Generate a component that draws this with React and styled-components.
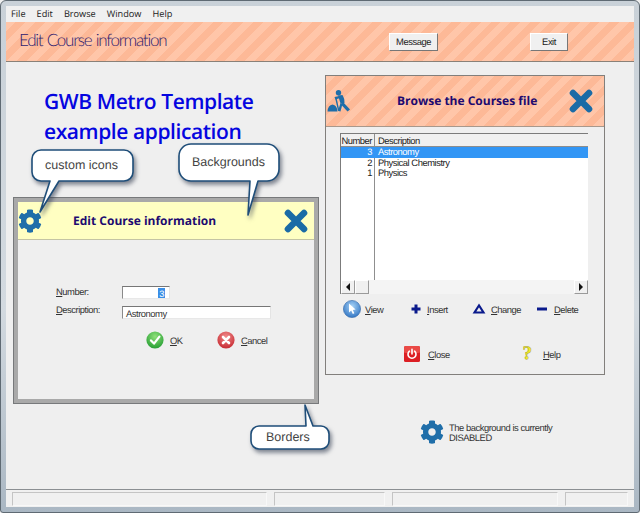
import React from 'react';
import styled, { createGlobalStyle } from 'styled-components';
import { FaCog } from 'react-icons/fa';

const Global = createGlobalStyle`
  html, body {
    margin: 0;
    padding: 0;
    background: #efefef;
  }
  * {
    box-sizing: border-box;
  }
`;

const stripes = `repeating-linear-gradient(135deg, #ffc6a9 0 7px, #fdb997 7px 14px)`;
const smallFont = `
  font: 400 9.4px/11px 'Liberation Sans', Arial, sans-serif;
  letter-spacing: -0.46px;
  text-rendering: geometricPrecision;
`;

const Frame = styled.div`
  width: 640px;
  height: 513px;
  display: flex;
  flex-direction: column;
  padding: 5px;
  border: 1px solid #5f6a73;
  border-radius: 6px 6px 3px 3px;
  background: linear-gradient(180deg, #c9d1d8 0%, #d3dae0 60%, #aab7c3 100%);
  overflow: hidden;
`;

const MenuBar = styled.div`
  height: 16px;
  flex: none;
  display: flex;
  gap: 11px;
  padding-left: 5px;
  align-items: center;
  background: #f0f0f0;
  color: #222;
  font: 400 9.2px/16px 'Open Sans', sans-serif;
  text-rendering: geometricPrecision;
`;

const Band = styled.div`
  height: 40px;
  flex: none;
  display: flex;
  align-items: center;
  background: ${stripes};
  border-bottom: 1px solid #8a8178;
`;

const BandTitle = styled.div`
  width: 383px;
  padding: 0 0 3px 13px;
  color: #2c1a70;
  font: 300 17px/20px Lato, sans-serif;
  letter-spacing: -1.25px;
  word-spacing: 1px;
  text-rendering: geometricPrecision;
  white-space: nowrap;
`;

const BandButton = styled.button`
  width: ${p => p.$width}px;
  height: 18px;
  margin-left: ${p => p.$gap || 0}px;
  padding: 0;
  background: #f0f0f0;
  border: 1px solid #fff;
  border-right: 1px solid #777;
  border-bottom: 1px solid #777;
  color: #222;
  ${smallFont}
`;

const Workspace = styled.div`
  position: relative;
  flex: 1;
  padding: 25px 38px;
  background: #efefef;
  border-bottom: 1px solid #8b8f92;
`;

const Heading = styled.h1`
  margin: 0;
  color: #0505e0;
  font: 600 21px/30px 'Open Sans', sans-serif;
  letter-spacing: -0.42px;
  text-rendering: geometricPrecision;
`;

const ChildWindow = styled.div`
  position: absolute;
  left: ${p => p.$left}px;
  top: ${p => p.$top}px;
  width: ${p => p.$width}px;
  height: ${p => p.$height}px;
  display: flex;
  flex-direction: column;
  background: #efefef;
  border: ${p => p.$thick ? '4px solid #a9a9a9' : '1px solid #827f7c'};
  box-shadow: ${p => p.$thick ? '0 0 0 1px #77797b' : 'none'};
`;

const WindowHead = styled.div`
  flex: none;
  height: ${p => p.$height}px;
  display: flex;
  align-items: center;
  padding-right: ${p => p.$right}px;
  background: ${p => p.$yellow ? '#ffffc2' : stripes};
  border-bottom: 1px solid ${p => p.$yellow ? '#c4c4a4' : '#a8988c'};
  color: #1f6ea9;
`;

const WindowTitle = styled.div`
  margin-left: ${p => p.$gap}px;
  color: #200a70;
  font: 700 12px/16px 'Open Sans', sans-serif;
  text-rendering: geometricPrecision;
  white-space: nowrap;
`;

const HeadGear = styled(FaCog)`
  flex: none;
  width: 24px;
  height: 24px;
`;

const WorkerIcon = styled.svg`
  flex: none;
  width: 24px;
  height: 24px;
  margin-left: 1px;
`;

const CloseMark = styled.svg`
  width: 26px;
  height: 26px;
  margin-left: auto;
  flex: none;
`;

const FormGrid = styled.div`
  display: grid;
  grid-template-columns: 66px 1fr;
  row-gap: 7px;
  padding: 46px 0 0 38px;
  align-items: start;
`;

const FieldLabel = styled.label`
  margin-top: ${p => p.$shift || 0}px;
  color: #333;
  ${smallFont}
`;

const TextBox = styled.div`
  width: ${p => p.$width}px;
  height: 13px;
  display: flex;
  justify-content: ${p => p.$right ? 'flex-end' : 'flex-start'};
  padding: 1px 4px 0 3px;
  background: #fff;
  border-top: 1px solid #767676;
  border-left: 1px solid #8a8a8a;
  border-right: 1px solid #e4e4e4;
  border-bottom: 1px solid #e8e8e8;
  color: #333;
  ${smallFont}
`;

const Selected = styled.span`
  background: #3a8ee6;
  color: #fff;
  padding: 0 1px;
`;

const ButtonRow = styled.div`
  display: flex;
  align-items: center;
  margin: ${p => p.$margin};
`;

const Action = styled.div`
  width: ${p => p.$width}px;
  flex: none;
  display: flex;
  align-items: center;
  gap: ${p => p.$gap}px;
  color: #333;
  ${smallFont}
`;

const IconSlot = styled.span`
  width: 18px;
  height: 18px;
  flex: none;
  display: flex;
  align-items: center;
  justify-content: center;
`;

const Key = styled.span`
  text-decoration: underline;
  text-underline-offset: 1px;
`;

const HelpGlyph = styled.span`
  color: #f4ee28;
  font: 700 19px/18px 'Liberation Serif', serif;
  -webkit-text-stroke: 0.5px #a9a21c;
`;

const ListBox = styled.div`
  width: 248px;
  height: 161px;
  margin: 6px 0 0 14px;
  display: flex;
  flex-direction: column;
  background: #fff;
  border-top: 1px solid #7b7b7b;
  border-left: 1px solid #7b7b7b;
  color: #222;
  ${smallFont}
`;

const ListRow = styled.div`
  display: grid;
  grid-template-columns: 34px 1fr;
  height: ${p => p.$height}px;
  line-height: ${p => p.$height}px;
  flex: none;
  background: ${p => p.$active ? '#3296f5' : 'transparent'};
  color: ${p => p.$active ? '#fff' : 'inherit'};
`;

const HeaderRow = styled(ListRow)`
  background: #f0f0f0;
  border-bottom: 1px solid #8d8d8d;
`;

const NumberCell = styled.div`
  text-align: right;
  padding-right: 2px;
  border-right: 1px solid ${p => p.$active ? 'transparent' : '#8f8f8f'};
`;

const TextCell = styled.div`
  padding-left: 3px;
`;

const ListBody = styled.div`
  flex: 1;
  background: linear-gradient(#8f8f8f, #8f8f8f) 33px 0 / 1px 100% no-repeat;
`;

const ScrollBar = styled.div`
  flex: none;
  height: 14px;
  display: flex;
  background: #f4f4f4;
`;

const ScrollButton = styled.div`
  width: ${p => p.$width || 14}px;
  margin-left: ${p => p.$push ? 'auto' : 0};
  display: flex;
  align-items: center;
  justify-content: center;
  background: #f0f0f0;
  border: 1px solid #fff;
  border-right-color: #9a9a9a;
  border-bottom-color: #9a9a9a;
`;

const Note = styled.div`
  position: absolute;
  left: 414px;
  top: 358px;
  display: flex;
  align-items: center;
  gap: 5px;
  color: #1f6ea9;
`;

const NoteText = styled.div`
  padding-top: 1px;
  color: #333;
  ${smallFont}
  line-height: 10px;
`;

const StatusBar = styled.div`
  flex: none;
  height: 17px;
  display: flex;
  gap: 7px;
  padding: 2px 6px 0 6px;
  background: #f0f0f0;
`;

const StatusField = styled.div`
  width: ${p => p.$width}px;
  height: 14px;
  border-top: 1px solid #c4c4c4;
  border-left: 1px solid #c4c4c4;
  border-right: 1px solid #f8f8f8;
  border-bottom: 1px solid #f8f8f8;
`;

const CalloutBox = styled.div`
  position: absolute;
  left: ${p => p.$left - 6}px;
  top: ${p => p.$top - 62}px;
  width: ${p => p.$width}px;
  height: ${p => p.$height}px;
`;

const CalloutShape = styled.svg`
  display: block;
  overflow: visible;
  filter: drop-shadow(2px 3px 2px rgba(50, 60, 80, 0.6));
`;

const CalloutText = styled.span`
  position: absolute;
  left: ${p => p.$x}px;
  top: ${p => p.$y}px;
  color: #444;
  font: 400 12.5px/16px 'Liberation Sans', Arial, sans-serif;
  text-rendering: geometricPrecision;
  white-space: nowrap;
`;

const Callout = ({ left, top, width, height, d, x, y, children }) => (
  <CalloutBox $left={left} $top={top} $width={width} $height={height}>
    <CalloutShape width={width} height={height} viewBox={`0 0 ${width} ${height}`}>
      <path d={d} fill="#fff" stroke="#1f4e79" strokeWidth="1.6" strokeLinejoin="round" />
    </CalloutShape>
    <CalloutText $x={x} $y={y}>{children}</CalloutText>
  </CalloutBox>
);

const XMark = () => (
  <CloseMark viewBox="0 0 26 26">
    <path d="M5 5 L21 21 M21 5 L5 21" stroke="#1a6ba6" strokeWidth="6.6" strokeLinecap="round" />
  </CloseMark>
);

const Worker = () => (
  <WorkerIcon viewBox="0 0 24 24" fill="#1f6ea9">
    <path d="M0.5 22.5 Q1 16 5.5 15.5 Q10 16 10.5 22.5 Z" />
    <circle cx="11.5" cy="3.8" r="2.7" />
    <path d="M11 6.5 L15.5 6 Q17.5 9 17.5 14 L13.5 14.5 Z" />
    <path d="M15.5 12.5 L23 20.5 L20.5 22.5 L14 15.5 Z" />
    <path d="M13.5 14 L15.5 15 L13.5 22.5 L11 22 Z" />
    <path d="M7.5 8 L12.5 7 L13 9 L8.6 10.4 Z" />
    <path d="M8 8.5 L9.4 8.2 L12.4 21.5 L11 21.8 Z" />
  </WorkerIcon>
);

const ViewIcon = () => (
  <svg width="18" height="18" viewBox="0 0 18 18">
    <defs>
      <radialGradient id="viewBall" cx="50%" cy="35%" r="70%">
        <stop offset="0" stopColor="#a9d4f7" />
        <stop offset="1" stopColor="#2a6fc0" />
      </radialGradient>
    </defs>
    <circle cx="9" cy="9" r="8.6" fill="url(#viewBall)" stroke="#3468a8" strokeWidth="0.6" />
    <path d="M6 3.6 L6 12.6 L8.2 10.6 L9.8 14 L11.4 13.2 L9.8 9.9 L12.6 9.6 Z" fill="#fff" />
  </svg>
);

const PlusIcon = () => (
  <svg width="18" height="18" viewBox="0 0 18 18">
    <path d="M9 4.5 V13.5 M4.5 9 H13.5" stroke="#0a1a8c" strokeWidth="3" />
  </svg>
);

const ChangeIcon = () => (
  <svg width="18" height="18" viewBox="0 0 18 18">
    <path d="M9 5.4 L13.6 12.6 H4.4 Z" fill="none" stroke="#0a1a8c" strokeWidth="2" />
  </svg>
);

const MinusIcon = () => (
  <svg width="18" height="18" viewBox="0 0 18 18">
    <path d="M4 9 H14" stroke="#0a1a8c" strokeWidth="3" />
  </svg>
);

const PowerIcon = () => (
  <svg width="16" height="16" viewBox="0 0 16 16">
    <rect width="16" height="16" rx="1.5" fill="#dc1f24" />
    <rect width="16" height="7" rx="1.5" fill="#ea4a46" />
    <path d="M5.4 5.2 A4 4 0 1 0 10.6 5.2 M8 3.4 V8" fill="none" stroke="#fff" strokeWidth="1.6" strokeLinecap="round" />
  </svg>
);

const OkIcon = () => (
  <svg width="18" height="18" viewBox="0 0 18 18">
    <defs>
      <radialGradient id="okBall" cx="50%" cy="30%" r="75%">
        <stop offset="0" stopColor="#8fe07a" />
        <stop offset="1" stopColor="#1f9a2e" />
      </radialGradient>
    </defs>
    <circle cx="9" cy="9" r="8.6" fill="url(#okBall)" />
    <path d="M5 9.4 L8 12.6 L13.4 5.6" fill="none" stroke="#fff" strokeWidth="2.2" strokeLinecap="round" strokeLinejoin="round" />
  </svg>
);

const CancelIcon = () => (
  <svg width="18" height="18" viewBox="0 0 18 18">
    <defs>
      <radialGradient id="cancelBall" cx="50%" cy="30%" r="75%">
        <stop offset="0" stopColor="#f08a8a" />
        <stop offset="1" stopColor="#c4242c" />
      </radialGradient>
    </defs>
    <circle cx="9" cy="9" r="8.6" fill="url(#cancelBall)" />
    <path d="M6 6 L12 12 M12 6 L6 12" stroke="#fff" strokeWidth="2.6" strokeLinecap="round" />
  </svg>
);

const Arrow = ({ d }) => (
  <svg width="6" height="8" viewBox="0 0 6 8">
    <path d={d} fill="#111" />
  </svg>
);

const menus = ['File', 'Edit', 'Browse', 'Window', 'Help'];

const courses = [
  { number: 3, name: 'Astronomy', active: true },
  { number: 2, name: 'Physical Chemistry' },
  { number: 1, name: 'Physics' },
];

const statusWidths = [255, 111, 166, 63];

const BrowseWindow = () => (
  <ChildWindow $left={319} $top={13} $width={280} $height={300}>
    <WindowHead $height={51} $right={10}>
      <Worker />
      <WindowTitle $gap={46}>Browse the Courses file</WindowTitle>
      <XMark />
    </WindowHead>
    <ListBox>
      <HeaderRow $height={13}>
        <NumberCell>Number</NumberCell>
        <TextCell>Description</TextCell>
      </HeaderRow>
      {courses.map(course => (
        <ListRow key={course.number} $height={10.6} $active={course.active}>
          <NumberCell $active={course.active}>{course.number}</NumberCell>
          <TextCell>{course.name}</TextCell>
        </ListRow>
      ))}
      <ListBody />
      <ScrollBar>
        <ScrollButton><Arrow d="M5 0 V8 L1 4 Z" /></ScrollButton>
        <ScrollButton />
        <ScrollButton $push><Arrow d="M1 0 V8 L5 4 Z" /></ScrollButton>
      </ScrollBar>
    </ListBox>
    <ButtonRow $margin="6px 0 0 17px">
      <Action $width={64} $gap={4}><IconSlot><ViewIcon /></IconSlot><span><Key>V</Key>iew</span></Action>
      <Action $width={63} $gap={2}><IconSlot><PlusIcon /></IconSlot><span><Key>I</Key>nsert</span></Action>
      <Action $width={63} $gap={3}><IconSlot><ChangeIcon /></IconSlot><span><Key>C</Key>hange</span></Action>
      <Action $width={60} $gap={3}><IconSlot><MinusIcon /></IconSlot><span><Key>D</Key>elete</span></Action>
    </ButtonRow>
    <ButtonRow $margin="27px 0 0 77px">
      <Action $width={115} $gap={7}><IconSlot><PowerIcon /></IconSlot><span><Key>C</Key>lose</span></Action>
      <Action $width={60} $gap={7}><IconSlot><HelpGlyph>?</HelpGlyph></IconSlot><span><Key>H</Key>elp</span></Action>
    </ButtonRow>
  </ChildWindow>
);

const EditWindow = () => (
  <ChildWindow $thick $left={8} $top={136} $width={304} $height={205}>
    <WindowHead $yellow $height={38} $right={5}>
      <HeadGear />
      <WindowTitle $gap={31}>Edit Course information</WindowTitle>
      <XMark />
    </WindowHead>
    <FormGrid>
      <FieldLabel><Key>N</Key>umber:</FieldLabel>
      <TextBox $width={48} $right><Selected>3</Selected></TextBox>
      <FieldLabel $shift={-2}><Key>D</Key>escription:</FieldLabel>
      <TextBox $width={149}>Astronomy</TextBox>
    </FormGrid>
    <ButtonRow $margin="12px 0 0 128px">
      <Action $width={71} $gap={6}><IconSlot><OkIcon /></IconSlot><span><Key>O</Key>K</span></Action>
      <Action $width={70} $gap={6}><IconSlot><CancelIcon /></IconSlot><span><Key>C</Key>ancel</span></Action>
    </ButtonRow>
  </ChildWindow>
);

const App = () => (
  <>
    <Global />
    <Frame>
      <MenuBar>
        {menus.map(menu => <span key={menu}>{menu}</span>)}
      </MenuBar>
      <Band>
        <BandTitle>Edit Course information</BandTitle>
        <BandButton $width={49}>Message</BandButton>
        <BandButton $width={38} $gap={92}>Exit</BandButton>
      </Band>
      <Workspace>
        <Heading>GWB Metro Template<br />example application</Heading>
        <BrowseWindow />
        <EditWindow />
        <Callout
          left={30} top={148} width={106} height={66} x={15} y={9}
          d="M11 2 H94 a9 9 0 0 1 9 9 V24 a9 9 0 0 1 -9 9 H29 L10 64 L20 33 H11 a9 9 0 0 1 -9 -9 V11 a9 9 0 0 1 9 -9 Z"
        >
          custom icons
        </Callout>
        <Callout
          left={177} top={142} width={106} height={76} x={15} y={12}
          d="M14 2 H90 a12 12 0 0 1 12 12 V27 a12 12 0 0 1 -12 12 H81 L71 73 L73 39 H14 a12 12 0 0 1 -12 -12 V14 a12 12 0 0 1 12 -12 Z"
        >
          Backgrounds
        </Callout>
        <Callout
          left={249} top={403} width={84} height={50} x={17} y={26}
          d="M10 23 H57 L56 2 L64 23 H72 a8 8 0 0 1 8 8 V38 a8 8 0 0 1 -8 8 H10 a8 8 0 0 1 -8 -8 V31 a8 8 0 0 1 8 -8 Z"
        >
          Borders
        </Callout>
        <Note>
          <HeadGear />
          <NoteText>The background is currently<br />DISABLED</NoteText>
        </Note>
      </Workspace>
      <StatusBar>
        {statusWidths.map(width => <StatusField key={width} $width={width} />)}
      </StatusBar>
    </Frame>
  </>
);

export default App;
